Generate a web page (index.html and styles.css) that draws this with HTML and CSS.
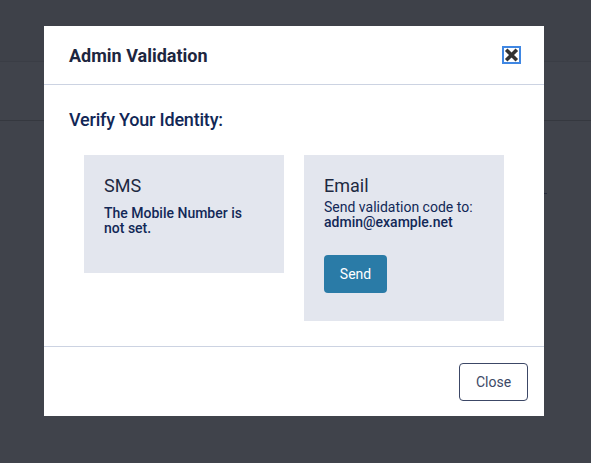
FILE: index.html
```html
<!DOCTYPE html>
<html lang="en">
<head>
<meta charset="utf-8">
<title>Admin Validation</title>
<link rel="stylesheet" href="styles.css">
</head>
<body>
<div class="page">
  <div class="page-top"></div>
  <div class="page-bar"></div>
  <span class="page-mark"></span>
</div>
<div class="overlay">
  <div class="modal">
    <div class="modal-header">
      <h2 class="modal-title">Admin Validation</h2>
      <button class="btn-x" aria-label="Close">
        <svg width="15" height="14" viewBox="0 0 15 14"><path d="M2.2 1.7 L12.8 12.3 M12.8 1.7 L2.2 12.3" stroke="#333" stroke-width="3.6" stroke-linecap="butt"/></svg>
      </button>
    </div>
    <div class="modal-body">
      <h3 class="section-title">Verify Your Identity:</h3>
      <div class="cards">
        <div class="card">
          <h4 class="card-title">SMS</h4>
          <p class="card-note">The Mobile Number is not set.</p>
        </div>
        <div class="card">
          <h4 class="card-title card-title-tight">Email</h4>
          <p class="card-text">Send validation code to:<br><strong>admin@example.net</strong></p>
          <button class="btn-send">Send</button>
        </div>
      </div>
    </div>
    <div class="modal-footer">
      <button class="btn-close">Close</button>
    </div>
  </div>
</div>
</body>
</html>
```

FILE: styles.css
```css
* { box-sizing: border-box; }
html, body {
  margin: 0;
  height: 100%;
}
body {
  font-family: Roboto, "Liberation Sans", sans-serif;
  background: #40434b;
  overflow: hidden;
}
.page { height: 100%; }
.page-top {
  height: 62px;
  background: #3e4149;
  border-bottom: 1px solid #3a3d45;
}
.page-bar {
  height: 59px;
  border-bottom: 1px solid #35383f;
}
.page-mark {
  position: absolute;
  left: 544px;
  top: 193px;
  width: 3px;
  height: 1px;
  background: #262a3a;
}
.overlay {
  position: fixed;
  inset: 0;
  padding: 26px 0 0 44px;
}
.modal {
  width: 500px;
  background: #fff;
}
.modal-header {
  height: 59px;
  display: flex;
  align-items: center;
  justify-content: space-between;
  padding: 0 23px 0 24px;
  border-bottom: 1px solid #ccd3e2;
}
.modal-title {
  margin: 0 0 0 1px;
  font-size: 18px;
  font-weight: 700;
  line-height: 27px;
  color: #1d2640;
}
.btn-x {
  width: 19px;
  height: 18px;
  padding: 0;
  border: 2px solid #3f87e3;
  background: #fff;
  display: flex;
  align-items: center;
  justify-content: center;
}
.btn-x svg { display: block; }
.modal-body {
  padding: 24px 24px 25px;
}
.section-title {
  margin: 0 0 24px 1px;
  font-size: 18px;
  font-weight: 500;
  line-height: 22px;
  letter-spacing: -0.2px;
  color: #112756;
}
.cards {
  display: flex;
  align-items: flex-start;
  gap: 20px;
  padding-left: 16px;
}
.card {
  width: 200px;
  background: #e3e6ee;
  padding: 20px;
}
.card-title {
  margin: 0 0 9px;
  font-size: 18px;
  font-weight: 400;
  line-height: 21.6px;
  color: #1e2941;
}
.card-title-tight { margin-bottom: 3px; }
.card-note {
  margin: 0 0 17px;
  font-size: 14px;
  font-weight: 500;
  line-height: 15px;
  color: #122857;
}
.card-text {
  margin: 0 0 25px;
  font-size: 14px;
  font-weight: 400;
  line-height: 15px;
  color: #122857;
}
.card-text strong { font-weight: 500; }
.btn-send {
  display: block;
  width: 63px;
  height: 38px;
  margin-bottom: 8px;
  border: 0;
  border-radius: 4px;
  background: #2a7ba7;
  color: #fff;
  font-family: Roboto, "Liberation Sans", sans-serif;
  font-size: 14px;
  padding: 0;
}
.modal-footer {
  display: flex;
  justify-content: flex-end;
  padding: 16px 16px 15px;
  border-top: 1px solid #ccd3e2;
}
.btn-close {
  width: 69px;
  height: 38px;
  border: 1px solid #3c4766;
  border-radius: 4px;
  background: #fff;
  color: #3d4966;
  font-family: Roboto, "Liberation Sans", sans-serif;
  font-size: 14px;
  padding: 0;
}
```
